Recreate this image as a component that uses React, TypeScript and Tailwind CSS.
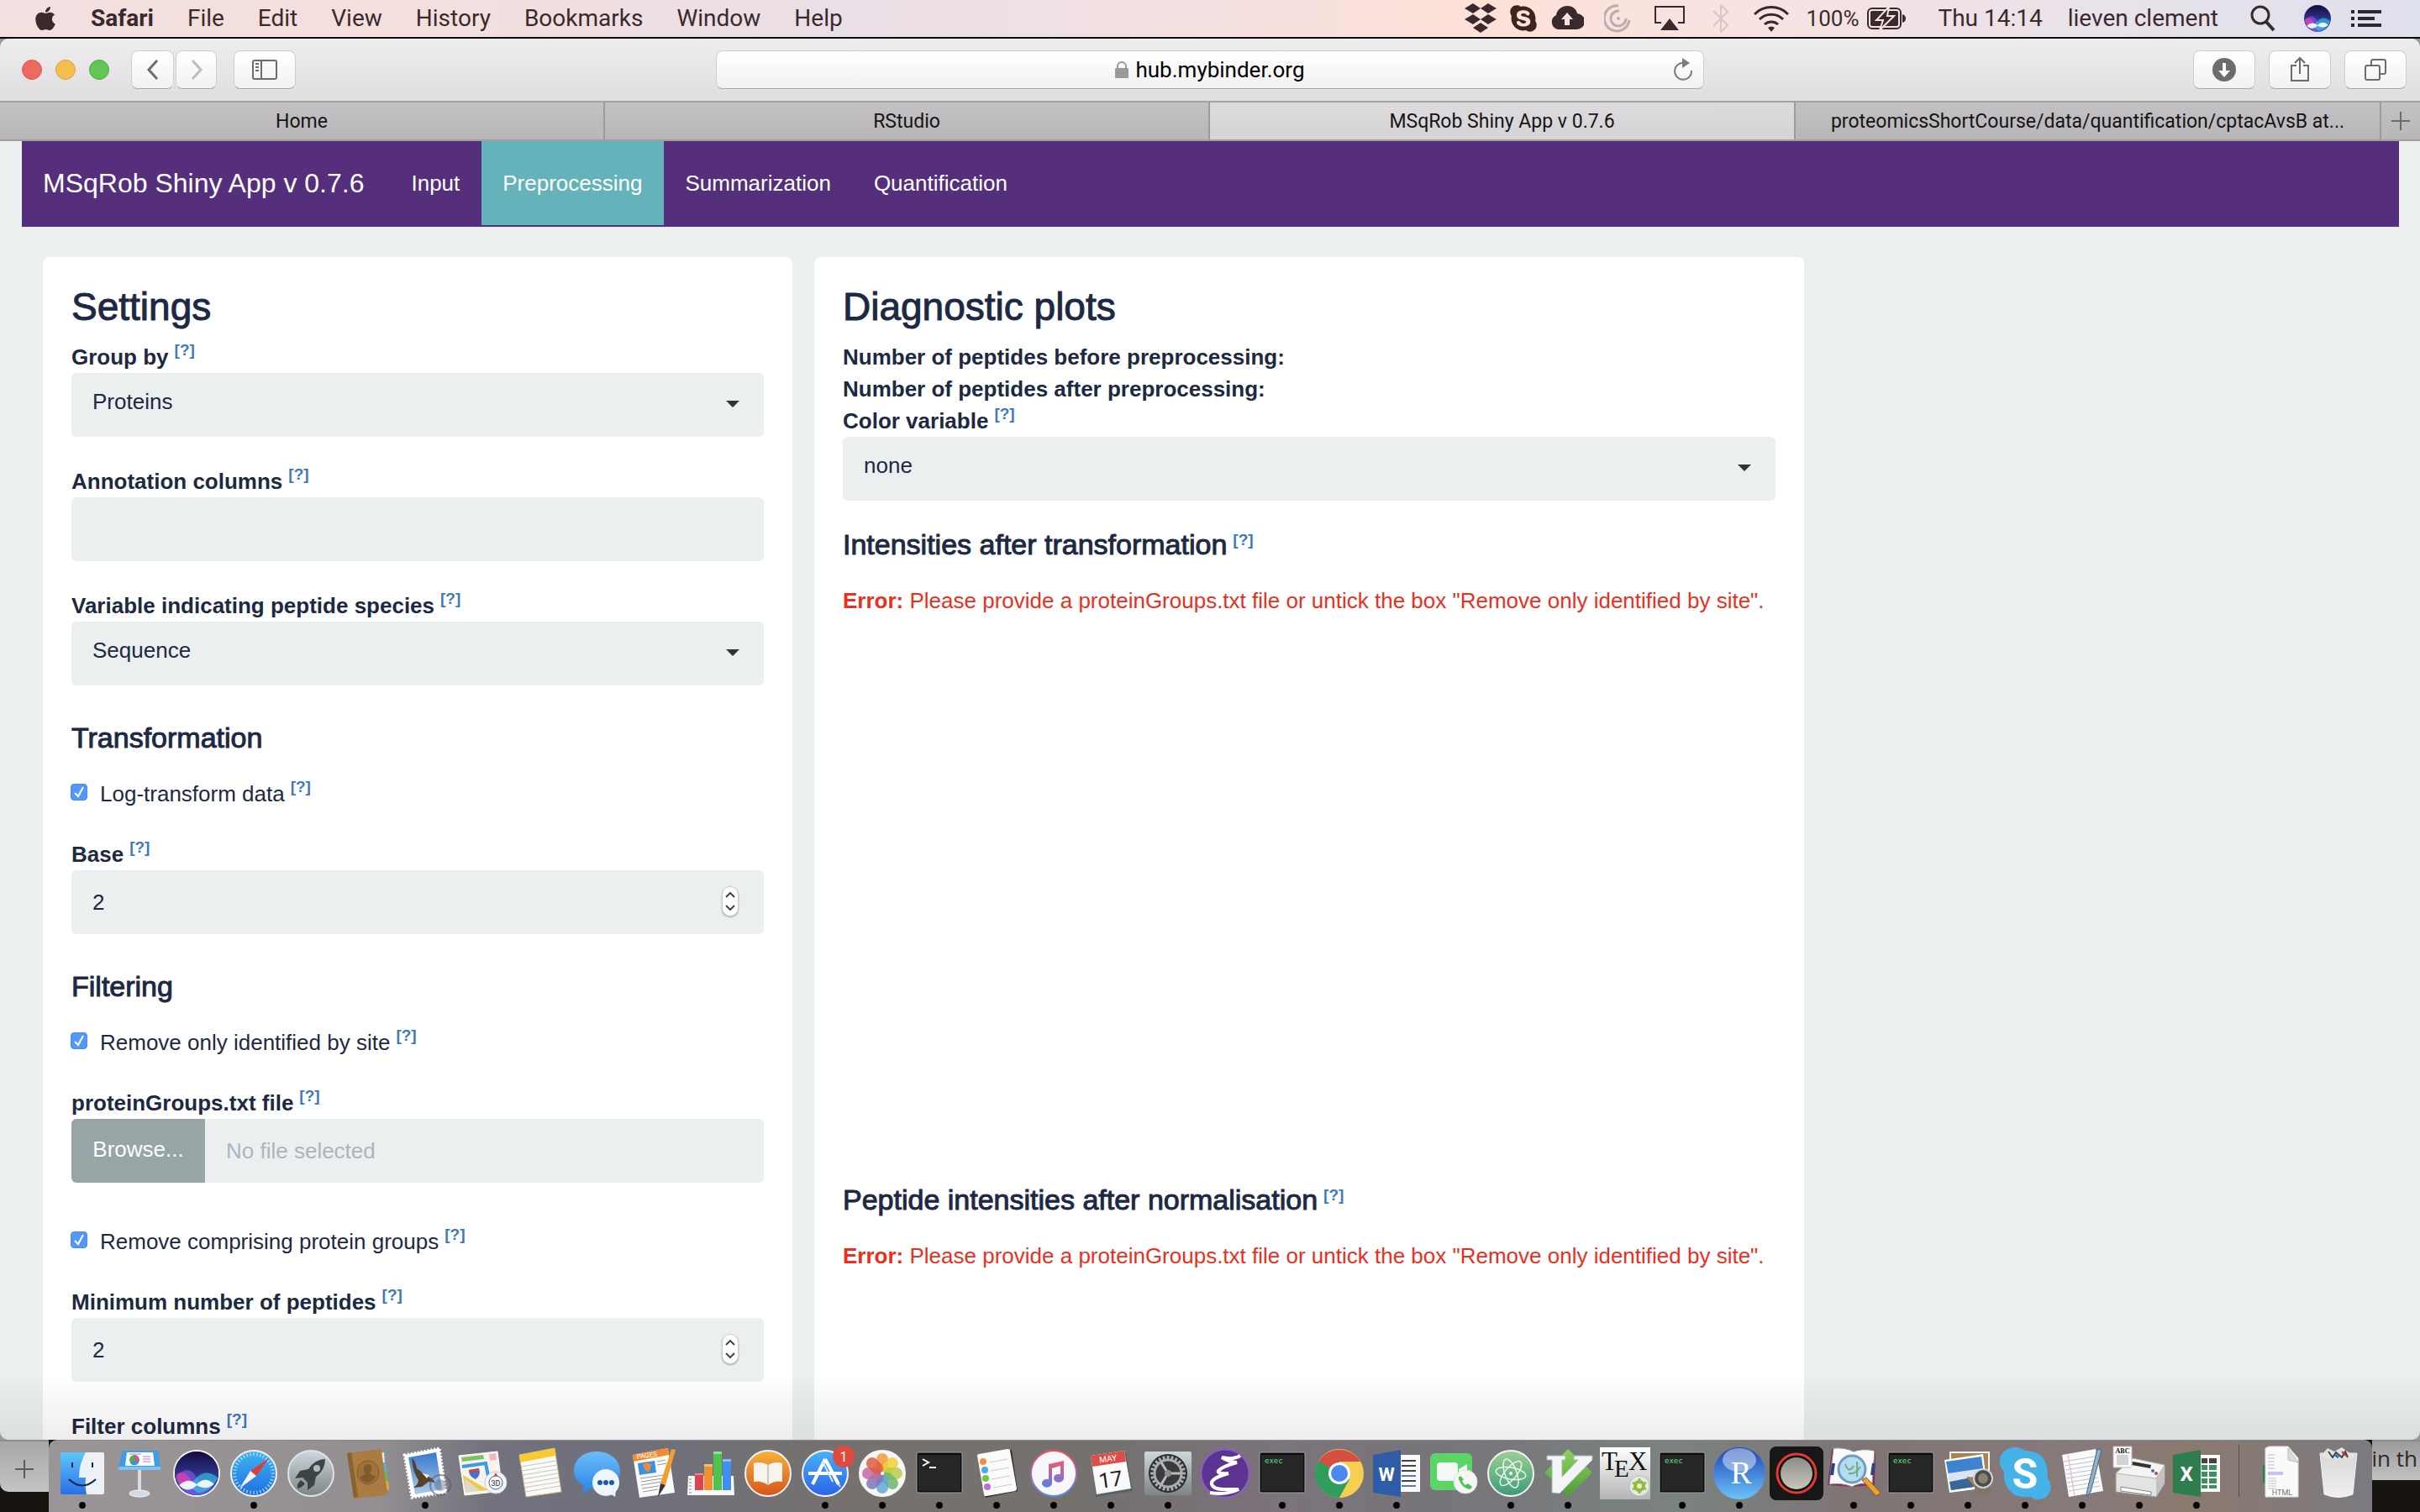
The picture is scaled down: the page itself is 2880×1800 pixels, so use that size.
import React, { useState } from "react";
import { FaApple, FaSkype } from "react-icons/fa";

/* ------------------------------------------------------------------ */
/* Menu bar                                                            */
/* ------------------------------------------------------------------ */

const menus = ["File", "Edit", "View", "History", "Bookmarks", "Window", "Help"];

function SiriOrb({ r = 16 }: { r?: number }) {
  return (
    <g>
      <circle r={r} fill="url(#siri)" />
      <path d={`M${-r * 0.95} ${r * 0.2} Q${-r * 0.4} ${-r * 0.5} 0 ${r * 0.2} T${r * 0.95} ${r * 0.2} Q${r * 0.5} ${r} 0 ${r * 0.98} Q${-r * 0.6} ${r} ${-r * 0.95} ${r * 0.2}Z`} fill="#7a5be8" opacity=".65" />
      <path d={`M${-r * 0.95} ${r * 0.25} Q${-r * 0.5} ${r * 0.7} ${-r * 0.1} ${r * 0.3} Q${r * 0.4} ${-r * 0.3} ${r * 0.96} ${r * 0.2} Q${r * 0.7} ${r * 0.8} ${r * 0.1} ${r * 0.9} Z`} fill="#2fd6e6" opacity=".6" />
      <path d={`M${-r * 0.95} ${r * 0.1} Q${-r * 0.6} ${-r * 0.3} ${-r * 0.2} ${r * 0.4} L${-r * 0.8} ${r * 0.5}Z`} fill="#e83ca8" opacity=".75" />
      <path d={`M${-r * 0.8} ${r * 0.55} Q${-r * 0.4} ${r * 0.15} 0 ${r * 0.5} Q${r * 0.4} ${r * 0.1} ${r * 0.8} ${r * 0.5} Q${r * 0.4} ${r * 0.8} 0 ${r * 0.55} Q${-r * 0.4} ${r * 0.95} ${-r * 0.8} ${r * 0.55}Z`} fill="#fff" opacity=".9" />
    </g>
  );
}

function MenuBar() {
  return (
    <header className="flex h-[46px] shrink-0 items-center border-b-2 border-[#08070a] bg-[linear-gradient(90deg,#f2dfdf_0%,#f4dfdd_16%,#e9dfe6_35%,#f3e0e0_50%,#fee1d8_61%,#f7e3e2_73%,#e9e2e9_86%,#dfe1ec_100%)] pr-[46px] pl-[38px] text-[28px] leading-none text-[#3a2a2d]">
      <FaApple className="mr-[38px] size-[32px]" />
      <nav aria-label="Menu bar" className="flex items-center gap-10">
        <button className="font-bold">Safari</button>
        {menus.map((m) => (
          <button key={m}>{m}</button>
        ))}
      </nav>
      <div className="ml-auto flex items-center">
        <svg className="w-[38px]" viewBox="0 0 38 36" fill="currentColor">
          <path d="M10 0l9 6-9 6-10-6zM28 0l10 6-10 6-9-6zM10 13l9 6-9 6-10-6zM28 13l10 6-10 6-9-6zM19 23l9 6-9 6-9-6z" />
        </svg>
        <FaSkype className="ml-[14px] size-[36px] text-[#3c251f]" />
        <svg className="ml-[14px] w-[40px]" viewBox="0 0 40 30">
          <path d="M9 28a9 9 0 01-2-17C8 4 14 0 20 0c7 0 11 4 12 9a9 9 0 01-1 19z" fill="currentColor" />
          <path d="M20 8l7 8h-4v7h-6v-7h-4z" fill="#f5e3e1" />
        </svg>
        <svg className="ml-[24px] w-[32px]" viewBox="0 0 32 34" fill="none" stroke="#bfacae" strokeWidth="3">
          <path d="M17 2a15 15 0 1013 17M18 8a9 9 0 108 9" />
          <circle cx="17" cy="17" r="1.500" fill="#bfacae" strokeWidth="1" />
        </svg>
        <svg className="ml-[28px] w-[36px]" viewBox="0 0 36 32">
          <path d="M8 21H1V2h34v19h-7" fill="none" stroke="currentColor" strokeWidth="2" />
          <path d="M18 16l11 14H7z" fill="currentColor" />
        </svg>
        <svg className="ml-[33px] w-[20px]" viewBox="0 0 20 34" fill="none" stroke="#d6c5c7" strokeWidth="2">
          <path d="M1 8l17 17-8 8V1l8 8L1 26" />
        </svg>
        <svg className="ml-[29px] w-[42px]" viewBox="0 0 42 32" fill="none" stroke="currentColor" strokeWidth="3">
          <path d="M1 11a28 28 0 0140 0M7 17a20 20 0 0128 0M13 23a12 12 0 0116 0" />
          <path d="M17 27q4-3 8 0l-4 5z" fill="currentColor" stroke="none" />
        </svg>
        <span className="ml-[21px] text-[26px]">100%</span>
        <svg className="ml-[10px] w-[46px]" viewBox="0 0 46 26">
          <rect x="1" y="1" width="39" height="24" rx="5" fill="none" stroke="currentColor" strokeWidth="2" />
          <rect x="4" y="4" width="33" height="18" rx="2" fill="currentColor" />
          <path d="M42 8q4 1 4 5t-4 5z" fill="currentColor" />
          <path d="M26-1L11 15h8l-4 12 17-17h-8z" fill="currentColor" stroke="#f7e4e2" strokeWidth="2" />
        </svg>
        <span className="ml-[38px]">Thu 14:14</span>
        <span className="ml-[30px]">lieven clement</span>
        <svg className="ml-[38px] w-[30px]" viewBox="0 0 30 32" fill="none" stroke="currentColor">
          <circle cx="12" cy="12" r="10" strokeWidth="3" />
          <path d="M19 20l9 10" strokeWidth="4" />
        </svg>
        <svg className="ml-[34px] w-[32px]" viewBox="-16 -16 32 32">
          <SiriOrb />
        </svg>
        <svg className="ml-[24px] w-[36px]" viewBox="0 0 36 20" fill="#2c2733">
          <path d="M0 0h4v4H0zM8 0h28v4H8zM0 8h4v4H0zM8 8h20v4H8zM0 16h4v4H0zM8 16h28v4H8z" />
        </svg>
      </div>
    </header>
  );
}

/* ------------------------------------------------------------------ */
/* Browser chrome                                                      */
/* ------------------------------------------------------------------ */

const toolButton =
  "flex h-[46px] items-center justify-center rounded-lg border border-[#cfcdd0] border-b-[#a8a6a9] bg-linear-to-b from-white to-[#f2f1f2] text-[#6c6c6c]";

function Toolbar() {
  return (
    <div className="flex h-[76px] shrink-0 items-center border-b-2 border-[#a3a1a4] bg-linear-to-b from-[#efedf0] to-[#dfdde0] pr-4 pl-[26px]">
      <div className="flex gap-4">
        <button aria-label="Close" className="size-6 rounded-full border border-[#d8574d] bg-[#ee6a5f]" />
        <button aria-label="Minimize" className="size-6 rounded-full border border-[#d9a33c] bg-[#f5be4f]" />
        <button aria-label="Zoom" className="size-6 rounded-full border border-[#50a73f] bg-[#62c655]" />
      </div>
      <div className="ml-[26px] flex w-[582px] gap-[2px]">
        <button aria-label="Back" className={`${toolButton} w-[51px]`}>
          <svg className="w-[14px]" viewBox="0 0 14 24" fill="none" stroke="currentColor" strokeWidth="3">
            <path d="M12 1L2 12l10 11" />
          </svg>
        </button>
        <button aria-label="Forward" className={`${toolButton} w-[49px]`}>
          <svg className="w-[14px]" viewBox="0 0 14 24" fill="none" stroke="#bdbdbd" strokeWidth="3">
            <path d="M2 1l10 11L2 23" />
          </svg>
        </button>
        <button aria-label="Show sidebar" className={`${toolButton} ml-[18px] w-[74px]`}>
          <svg className="w-[30px]" viewBox="0 0 30 24" fill="none" stroke="currentColor" strokeWidth="2">
            <rect x="1" y="1" width="28" height="22" rx="2" />
            <path d="M11 1v22M4 5h4M4 9h4M4 13h4" />
          </svg>
        </button>
      </div>
      <div className={`${toolButton} ml-[114px] min-w-0 flex-1 px-3`}>
        <span className="w-6" />
        <label className="flex flex-1 items-center justify-center gap-2">
          <svg className="w-[16px]" viewBox="0 0 16 20" fill="#9a9a9a">
            <rect x="0" y="8" width="16" height="12" rx="1" />
            <path d="M3 9V6a5 5 0 0110 0v3" fill="none" stroke="#9a9a9a" strokeWidth="2" />
          </svg>
          <input aria-label="Address" defaultValue="hub.mybinder.org" className="field-sizing-content bg-transparent text-[26px] leading-8 text-black" />
        </label>
        <button aria-label="Reload">
          <svg className="w-6" viewBox="0 0 24 28" fill="none" stroke="#7d7d7d" strokeWidth="2">
            <path d="M14 6a10 10 0 108 9" />
            <path d="M11 0l9 6-9 6z" fill="#7d7d7d" stroke="none" />
          </svg>
        </button>
      </div>
      <div className="ml-[582px] flex gap-4">
        <button aria-label="Downloads" className={`${toolButton} w-[74px]`}>
          <svg className="w-7" viewBox="0 0 28 28">
            <circle cx="14" cy="14" r="14" fill="#6c6c6c" />
            <path d="M12 6h4v9h5l-7 8-7-8h5z" fill="#fff" />
          </svg>
        </button>
        <button aria-label="Share" className={`${toolButton} w-[74px]`}>
          <svg className="w-[24px]" viewBox="0 0 24 32" fill="none" stroke="currentColor" strokeWidth="2">
            <path d="M8 11H2v18h20V11h-6M12 21V3M6 8l6-6 6 6" />
          </svg>
        </button>
        <button aria-label="Show all tabs" className={`${toolButton} w-[74px]`}>
          <svg className="w-[26px]" viewBox="0 0 26 26" fill="none" stroke="currentColor" strokeWidth="2">
            <rect x="1" y="8" width="17" height="17" rx="2" />
            <path d="M8 8V3q0-2 2-2h13q2 0 2 2v13q0 2-2 2h-5" />
          </svg>
        </button>
      </div>
    </div>
  );
}

function TabBar() {
  const tab = "flex items-center justify-center border-r-2 border-[#9c9a9d] px-8 text-[23px] text-[#151515]";
  const idle = "bg-linear-to-b from-[#c3c1c4] to-[#b8b6b9]";
  return (
    <div role="tablist" className="grid h-[46px] shrink-0 grid-cols-[720fr_720fr_697fr_697fr_46fr] border-b-2 border-[#a09ea1] leading-none">
      <button role="tab" className={`${tab} ${idle}`}>Home</button>
      <button role="tab" className={`${tab} ${idle}`}>RStudio</button>
      <button role="tab" aria-selected="true" className={`${tab} bg-linear-to-b from-[#dddbde] to-[#d5d3d6]`}>MSqRob Shiny App v 0.7.6</button>
      <button role="tab" className={`${tab} ${idle} whitespace-nowrap`}>proteomicsShortCourse/data/quantification/cptacAvsB at...</button>
      <button aria-label="New tab" className={`flex items-center justify-center ${idle}`}>
        <svg className="w-[22px]" viewBox="0 0 22 22" stroke="#6b6b6b" strokeWidth="2">
          <path d="M11 0v22M0 11h22" />
        </svg>
      </button>
    </div>
  );
}

/* ------------------------------------------------------------------ */
/* Web application                                                     */
/* ------------------------------------------------------------------ */

function Help() {
  return (
    <sup className="-top-[11px] ml-[7px] text-[19px] font-bold [-webkit-text-stroke:0]">
      <a href="#help" className="text-[#4079b8]">[?]</a>
    </sup>
  );
}

function FieldLabel({ id, children }: { id: string; children: React.ReactNode }) {
  return (
    <div className="font-bold">
      <label htmlFor={id}>{children}</label>
      <Help />
    </div>
  );
}

const box = "h-[76px] w-full rounded-md bg-[#ebeff0] px-[25px]";
const panelTitle = "mb-4 text-[46px] leading-[50px] [-webkit-text-stroke:1px]";
const sectionTitle = "mb-[30px] text-[34px] leading-9 [-webkit-text-stroke:1px]";

function SelectField({ id, label, value }: { id: string; label: string; value: string }) {
  return (
    <div className="mb-[34px]">
      <FieldLabel id={id}>{label}</FieldLabel>
      <div className="relative">
        <select id={id} className={`${box} block appearance-none pb-2`}>
          <option>{value}</option>
        </select>
        <svg className="pointer-events-none absolute top-[33px] right-[29px] w-4" viewBox="0 0 16 8">
          <path d="M0 0h16L8 8z" fill="#333" />
        </svg>
      </div>
    </div>
  );
}

function TextField({ id, label }: { id: string; label: string }) {
  return (
    <div className="mb-[34px]">
      <FieldLabel id={id}>{label}</FieldLabel>
      <input id={id} type="text" className={`${box} block`} />
    </div>
  );
}

function NumberField({ id, label }: { id: string; label: string }) {
  const [value, setValue] = useState(2);
  return (
    <div className="mb-[34px]">
      <FieldLabel id={id}>{label}</FieldLabel>
      <div className="relative">
        <input
          id={id}
          type="number"
          value={value}
          onChange={(e) => setValue(Number(e.target.value))}
          className={`${box} block [appearance:textfield] [&::-webkit-inner-spin-button]:appearance-none`}
        />
        <div className="absolute top-[19px] right-[30px] flex h-9 w-5 flex-col items-center justify-between rounded-full border border-[#cfcfcf] bg-white py-[6px] shadow-[0_1px_2px_rgba(0,0,0,0.35)]">
          <button aria-label="Increase" onClick={() => setValue(value + 1)}>
            <svg className="block w-[12px]" viewBox="0 0 12 7" fill="none" stroke="#444" strokeWidth="2">
              <path d="M1 6l5-5 5 5" />
            </svg>
          </button>
          <button aria-label="Decrease" onClick={() => setValue(value - 1)}>
            <svg className="block w-[12px]" viewBox="0 0 12 7" fill="none" stroke="#444" strokeWidth="2">
              <path d="M1 1l5 5 5-5" />
            </svg>
          </button>
        </div>
      </div>
    </div>
  );
}

function CheckField({ id, label }: { id: string; label: string }) {
  return (
    <div className="mb-[34px] flex">
      <span className="relative mt-[7px] mr-[15px] -ml-px block size-5">
        <input id={id} type="checkbox" defaultChecked className="peer block size-5 appearance-none rounded border border-[#a9b3c0] bg-white checked:border-[#4a8ff0] checked:bg-[#5398f8]" />
        <svg className="pointer-events-none absolute inset-0 hidden size-5 peer-checked:block" viewBox="0 0 20 20" fill="none" stroke="#fff" strokeWidth="2">
          <path d="M5 11l4 4 6-11" />
        </svg>
      </span>
      <div>
        <label htmlFor={id}>{label}</label>
        <Help />
      </div>
    </div>
  );
}

function SettingsPanel() {
  return (
    <section className="rounded-lg bg-white p-[34px]">
      <h2 className={panelTitle}>Settings</h2>
      <SelectField id="group-by" label="Group by" value="Proteins" />
      <TextField id="annotation" label="Annotation columns" />
      <SelectField id="species" label="Variable indicating peptide species" value="Sequence" />

      <h4 className={`${sectionTitle} mt-11`}>Transformation</h4>
      <CheckField id="log" label="Log-transform data" />
      <NumberField id="base" label="Base" />

      <h4 className={`${sectionTitle} mt-11`}>Filtering</h4>
      <CheckField id="by-site" label="Remove only identified by site" />
      <div className="mb-[51px]">
        <FieldLabel id="protein-groups">proteinGroups.txt file</FieldLabel>
        <div className="flex h-[76px] overflow-hidden rounded-md bg-[#ebeff0]">
          <button className="w-[159px] shrink-0 bg-[#97a5a6] pb-[5px] text-white">Browse...</button>
          <input id="protein-groups" readOnly placeholder="No file selected" className="min-w-0 flex-1 bg-transparent px-[25px] placeholder:text-[#acb5bd]" />
        </div>
      </div>
      <CheckField id="comprising" label="Remove comprising protein groups" />
      <NumberField id="min-peptides" label="Minimum number of peptides" />
      <TextField id="filter-columns" label="Filter columns" />
    </section>
  );
}

function PlotSlot({ title }: { title: string }) {
  return (
    <div className="h-[780px]">
      <h4 className={sectionTitle}>
        {title}
        <Help />
      </h4>
      <p role="alert" className="whitespace-nowrap text-[#e7301f]">
        <strong>Error:</strong> Please provide a proteinGroups.txt file or untick the box "Remove only identified by site".
      </p>
    </div>
  );
}

function PlotsPanel() {
  return (
    <section className="rounded-lg bg-white p-[34px]">
      <h2 className={panelTitle}>Diagnostic plots</h2>
      <p className="font-bold">Number of peptides before preprocessing:</p>
      <p className="font-bold">Number of peptides after preprocessing:</p>
      <SelectField id="color-variable" label="Color variable" value="none" />
      <PlotSlot title="Intensities after transformation" />
      <PlotSlot title="Peptide intensities after normalisation" />
    </section>
  );
}

function WebApp() {
  const link = "flex h-[100px] items-center pl-[25px] text-white";
  return (
    <main className="relative min-h-0 flex-1 overflow-hidden bg-[#ebeff0] font-['Liberation_Sans',Arial,sans-serif] text-[26px] leading-[38px] text-[#1d2943]">
      <nav aria-label="Sections" className="mr-[25px] ml-[26px] flex h-[102px] bg-[#552f7c]">
        <a href="#home" className={`${link} pr-[31px] text-[32px]`}>MSqRob Shiny App v 0.7.6</a>
        <a href="#input" className={`${link} pr-[26px]`}>Input</a>
        <a href="#preprocessing" aria-current="page" className={`${link} bg-[#65b3ba] pr-[26px]`}>Preprocessing</a>
        <a href="#summarization" className={`${link} pr-[26px]`}>Summarization</a>
        <a href="#quantification" className={`${link} pr-[26px]`}>Quantification</a>
      </nav>
      <div className="mt-9 grid grid-cols-[892fr_1178fr_656fr] gap-x-[26px] px-[51px]">
        <SettingsPanel />
        <PlotsPanel />
      </div>
      <div className="pointer-events-none absolute inset-x-0 bottom-0 h-20 bg-linear-to-b from-transparent to-black/7" />
    </main>
  );
}

/* ------------------------------------------------------------------ */
/* Dock                                                                */
/* ------------------------------------------------------------------ */

function Exec({ prompt }: { prompt?: boolean }) {
  return (
    <g>
      <rect x="7" y="9" width="54" height="48" rx="2" fill="#0b0b0b" stroke="#9fa3a8" strokeWidth="1" />
      <rect x="9" y="12" width="50" height="43" fill="#262626" />
      {prompt ? (
        <path d="M14 17l7 4-7 4M22 27h8" fill="none" stroke="#fff" strokeWidth="2" />
      ) : (
        <text x="13" y="22" fontSize="9" fill="#5fe07a" fontFamily="DejaVu Sans Mono, monospace">exec</text>
      )}
    </g>
  );
}

function Lines({ x, y, w, n, step, color }: { x: number; y: number; w: number; n: number; step: number; color: string }) {
  return (
    <path d={Array.from({ length: n }, (_, i) => `M${x} ${y + i * step}h${w}`).join("")} stroke={color} strokeWidth="1" fill="none" />
  );
}

const ring = { cx: 34, cy: 34, r: 27, stroke: "#f4f4f4", strokeWidth: 2 };
const petals = ["#f29a38", "#f2cf3b", "#b5cf4b", "#6db56a", "#63a8d8", "#7d78b8", "#c06ba3", "#e25a45"];
const ticks = Array.from({ length: 36 }, (_, i) => i * 10);
const teeth = Array.from({ length: 24 }, (_, i) => i * 15);

type App = { name: string; open?: boolean; art: React.ReactNode };

const apps: App[] = [
  {
    name: "Finder", open: true,
    art: (
      <g>
        <rect x="8" y="9" width="52" height="50" rx="2" fill="url(#finder)" />
        <path d="M38 9h20q2 0 2 2v46q0 2-2 2H39q-2-9-1-20h-8q0-16 8-30z" fill="#eef2f8" />
        <path d="M22 21v6M46 21v6" stroke="#12263f" strokeWidth="2" />
        <path d="M18 41q16 15 32 0" fill="none" stroke="#12263f" strokeWidth="2" />
      </g>
    ),
  },
  {
    name: "Keynote",
    art: (
      <g>
        <rect x="32" y="28" width="4" height="29" fill="#d7dde4" />
        <ellipse cx="34" cy="58" rx="12" ry="4" fill="#cfdbe6" stroke="#f5f8fa" />
        <path d="M14 7h42l3 19v4H9v-4z" fill="#3f9de8" />
        <path d="M9 26h50v4H9z" fill="#7cc4f5" />
        <path d="M19 9h31l2 16H17z" fill="#fff" />
        <circle cx="28" cy="18" r="6" fill="#4caf50" />
        <path d="M28 18v-6a6 6 0 015 8z" fill="#e84c8a" /><path d="M28 18l5 3a6 6 0 01-10 1z" fill="#3b8fe0" />
        <path d="M22 11h14M38 14h9M38 17h9M38 20h9" stroke="#b77ad0" strokeWidth="1" />
      </g>
    ),
  },
  { name: "Siri", art: (<g><circle {...ring} fill="#18123a" /><g transform="translate(34 34)"><SiriOrb r={26} /></g></g>) },
  {
    name: "Safari", open: true,
    art: (
      <g>
        <circle {...ring} fill="url(#blue)" />
        {ticks.map((a) => (<path key={a} d="M34 9v4" stroke="#d7ecfb" strokeWidth="1" transform={`rotate(${a} 34 34)`} />))}
        <path d="M52 16L30 31l7 6z" fill="#e23b36" /><path d="M17 52l13-21 7 6z" fill="#f4f4f4" />
      </g>
    ),
  },
  {
    name: "Launchpad",
    art: (
      <g>
        <circle {...ring} stroke="#dfe4e6" fill="url(#silver)" />
        <path d="M51 17q-12 0-20 12l-10 2-6 9 9-1 6 6 0 9 8-6 2-10q11-8 11-21z" fill="#3d4347" />
        <circle cx="41" cy="28" r="4" fill="#b4bcc0" /><path d="M22 42q-5 4-4 10 6-1 9-6z" fill="#3d4347" />
      </g>
    ),
  },
  {
    name: "Contacts",
    art: (
      <g>
        <path d="M48 10l5-1 1 12-5 1z" fill="#e8e8e8" /><path d="M50 22l5-1 1 12-5 1z" fill="#52b6cc" /><path d="M51 33l5-1 1 12-5 1z" fill="#5dc44f" /><path d="M53 44l5-1 1 10-5 2z" fill="#f0a531" />
        <path d="M9 10l39-5 2 2 7 50-2 3-38 4z" fill="#aa7c44" /><path d="M9 10l5-1 8 53-5 1z" fill="#8a6232" />
        <ellipse cx="34" cy="33" rx="13" ry="14" fill="#a07238" stroke="#7f5a2c" />
        <path d="M34 23q5 0 4 6-1 4-2 5l7 4q-4 7-9 7t-10-6l7-5q-3-3-2-7 1-4 5-4z" fill="#7f5a2c" />
      </g>
    ),
  },
  {
    name: "Mail", open: true,
    art: (
      <g>
        <path d="M9 12l42-8 8 53-41 6z" fill="#fff" stroke="#fff" strokeWidth="3" strokeDasharray="2 2" />
        <path d="M14 15l33-6 7 44-32 6z" fill="url(#sky)" />
        <path d="M18 16q4 2 6 12 5 3 8 8l10 4 4 5q-4-1-8-1l-8 6-10 1q6-4 6-9-7-10-8-26z" fill="#5a4028" /><path d="M31 34l8 2-3 4z" fill="#f4efe2" />
        <circle cx="52" cy="48" r="12" fill="none" stroke="#555b66" strokeWidth="2" opacity=".6" /><circle cx="52" cy="48" r="7" fill="#555b66" opacity=".4" />
      </g>
    ),
  },
  {
    name: "Maps",
    art: (
      <g>
        <path d="M6 13l46-5 6 47-45 5z" fill="#f6f3ea" stroke="#fff" />
        <path d="M9 15l26-3 1 5-26 3z" fill="#7cc162" /><path d="M42 11l8-1 1 8-8 1z" fill="#f0b8c4" />
        <path d="M10 26l28-4 4 20" fill="none" stroke="#3a9be8" strokeWidth="4" /><path d="M14 56l-3-20 30 18z" fill="#f1c744" /><path d="M13 40l18 14-17 3z" fill="#dfd9c8" />
        <path d="M18 30l12-2q3 8-4 13-8-3-8-11z" fill="#4173c8" /><path d="M18 30l12-2v3l-12 2z" fill="#d8433b" />
        <circle cx="50" cy="45" r="13" fill="#f5f6f7" stroke="#c9ccd0" /><circle cx="50" cy="45" r="8" fill="none" stroke="#4b6d8b" />
        <text x="50" y="49" textAnchor="middle" fontSize="9" fill="#333">3D</text><path d="M50 33l2 4h-4z" fill="#d33" />
      </g>
    ),
  },
  {
    name: "Notes",
    art: (
      <g>
        <path d="M10 12l42-8 8 52-42 6z" fill="#fbfaf6" stroke="#c9b58c" /><path d="M10 12l42-8 1 9-42 8z" fill="#f7c933" />
        <path d="M12 26l42-7M13 31l42-7M14 36l42-7M14 41l42-7M15 46l42-7M16 51l42-7M17 56l42-7" stroke="#c7c7c7" strokeWidth="1" />
      </g>
    ),
  },
  {
    name: "Messages",
    art: (
      <g>
        <path d="M34 8c16 0 28 10 28 23S50 53 34 53q-5 0-8-1-4 5-11 6 5-5 3-10Q7 42 7 31C7 18 18 8 34 8z" fill="url(#bubble)" />
        <circle cx="45" cy="45" r="16" fill="#eef6fd" /><path d="M50 58l6 4 1-8z" fill="#eef6fd" />
        <circle cx="38" cy="45" r="3" fill="#1c5aa8" /><circle cx="45" cy="45" r="3" fill="#1c5aa8" /><circle cx="52" cy="45" r="3" fill="#1c5aa8" />
      </g>
    ),
  },
  {
    name: "Pages",
    art: (
      <g>
        <path d="M9 12l42-8 8 53-42 6z" fill="#fafafa" /><path d="M9 12l42-8 1 8-42 8z" fill="#f08c2e" />
        <text x="14" y="17" fontSize="8" fill="#fff" transform="rotate(-8 14 17)">PAGES</text>
        <path d="M15 22l20-3 2 14-20 3z" fill="#3d8fe0" /><path d="M21 23q5-2 10 0 0 6-4 10-5-4-6-10z" fill="#ef8b33" />
        <path d="M38 20l10-2M38 24l11-2M18 40l28-4M19 44l26-4M19 48l24-4M20 52l20-3M21 56l18-3" stroke="#999" strokeWidth="1" />
        <path d="M55 5l5 1-12 42-6-2z" fill="#f0a030" /><path d="M42 46l6 2-9 14z" fill="#333" />
      </g>
    ),
  },
  {
    name: "Numbers",
    art: (
      <g>
        <path d="M7 37h54l1 23H6z" fill="#f8f8f8" /><Lines x={8} y={41} w={3} n={5} step={4} color="#888" />
        <rect x="15" y="34" width="10" height="20" fill="#e0424e" /><rect x="26" y="23" width="10" height="31" fill="#f09035" /><rect x="37" y="8" width="10" height="46" fill="#4fc44c" /><rect x="48" y="17" width="10" height="37" fill="#3f8ff0" />
        <path d="M15 34h10v2H15zM26 23h10v3H26zM37 8h10v3H37zM48 17h10v3H48z" fill="#fff" opacity=".4" />
      </g>
    ),
  },
  {
    name: "iBooks",
    art: (<g><circle {...ring} fill="url(#orange)" /><path d="M34 24q-8-5-17-2v22q9-2 17 4 8-6 17-4V22q-9-3-17 2z" fill="#f7f4ef" /><path d="M34 24v24" stroke="#cfc5b8" strokeWidth="2" /></g>),
  },
  {
    name: "App Store", open: true,
    art: (
      <g>
        <circle {...ring} fill="url(#store)" />
        <path d="M34 17L19 47M34 17l16 30M14 34h40" stroke="#fff" strokeWidth="4" fill="none" /><path d="M31 20l12 24M50 47l2 3" stroke="#d7e9fb" strokeWidth="2" />
        <circle cx="56" cy="14" r="13" fill="#e14b3f" /><text x="56" y="20" textAnchor="middle" fontSize="16" fill="#fff">1</text>
      </g>
    ),
  },
  {
    name: "Photos", open: true,
    art: (
      <g>
        <circle {...ring} fill="#f7f7f7" />
        {petals.map((c, i) => (<rect key={c} x="27" y="10" width="14" height="23" rx="7" fill={c} opacity=".85" transform={`rotate(${i * 45} 34 34)`} />))}
        <circle cx="34" cy="34" r="2" fill="#fff" />
      </g>
    ),
  },
  { name: "Terminal", open: true, art: <Exec prompt /> },
  {
    name: "Reminders", open: true,
    art: (
      <g>
        <path d="M13 13l39-7 7 49-38 8z" fill="#333" /><path d="M11 13q0-2 2-2l34-6q3 0 3 2l8 45q0 2-2 3l-34 6q-3 0-3-2z" fill="#fbfbfb" />
        <circle cx="18" cy="20" r="4" fill="#f0923a" /><circle cx="20" cy="30" r="4" fill="#4aa8f0" /><circle cx="21" cy="40" r="4" fill="#6cc94b" /><circle cx="23" cy="50" r="4" fill="#b871d8" />
        <path d="M25 21l22-4M27 31l22-4M28 41l22-4M30 51l22-4" stroke="#ccc" />
      </g>
    ),
  },
  {
    name: "iTunes", open: true,
    art: (<g><circle cx="34" cy="34" r="27" fill="#f8f8fb" stroke="url(#tunes)" strokeWidth="2" /><path d="M28 23l18-4v21a6 5 0 11-4-5V25l-10 3v18a6 5 0 11-4-5z" fill="url(#note)" /></g>),
  },
  {
    name: "Calendar", open: true,
    art: (
      <g>
        <path d="M12 16l40-6 8 45-44 7z" fill="#56636b" /><path d="M10 13l40-6 8 45-41 7z" fill="#fafafa" /><path d="M10 13l40-6 2 13-40 6z" fill="#dc4f48" />
        <text x="31" y="20" textAnchor="middle" fontSize="10" fill="#fff" transform="rotate(-8 31 20)">MAY</text><text x="35" y="50" textAnchor="middle" fontSize="25" fill="#222" transform="rotate(-8 35 50)">17</text>
      </g>
    ),
  },
  {
    name: "System Preferences", open: true,
    art: (
      <g>
        <rect x="6" y="8" width="56" height="52" rx="2" fill="url(#silver)" /><circle cx="34" cy="34" r="23" fill="#2c2d2f" />
        {teeth.map((a) => (<path key={a} d="M34 13v5" stroke="#a9abad" strokeWidth="3" transform={`rotate(${a} 34 34)`} />))}
        <circle cx="34" cy="34" r="16" fill="#3a3b3d" stroke="#a9abad" strokeWidth="3" /><path d="M34 34l15 0M34 34l-8-13M34 34l-8 13" stroke="#b9bbbd" strokeWidth="3" /><circle cx="34" cy="34" r="4" fill="#8b8d90" />
      </g>
    ),
  },
  {
    name: "Emacs",
    art: (<g><circle cx="34" cy="34" r="29" fill="#5c3390" stroke="#8463ad" strokeWidth="3" /><path d="M52 13q-8 5-22 2 10 6 18 6-18 5-22 10-2 4 12 3-22 6-20 13 2 6 14 6h18q-14 7-34 4" fill="none" stroke="#fff" strokeWidth="4" /></g>),
  },
  { name: "exec", open: true, art: <Exec /> },
  {
    name: "Chrome", open: true,
    art: (
      <g>
        <circle cx="34" cy="34" r="29" fill="#f6cf52" /><path d="M34 34L9 20a29 29 0 0150 0H34z" fill="#d64f40" /><path d="M9 19a29 29 0 0025 44l12-22-12-7z" fill="#2f9e5c" /><path d="M34 21h25a29 29 0 01-25 42l13-22z" fill="#f6cf52" />
        <circle cx="34" cy="34" r="13" fill="#fff" /><circle cx="34" cy="34" r="10" fill="#4a8af0" />
      </g>
    ),
  },
  {
    name: "Word", open: true,
    art: (
      <g>
        <rect x="37" y="12" width="25" height="44" fill="#fafafa" /><path d="M40 19h17M40 25h17M40 31h17M40 43h17" stroke="#444" strokeWidth="2" /><path d="M40 37h17M40 49h17" stroke="#5578b8" strokeWidth="2" />
        <path d="M6 12l33-6v56L6 57z" fill="#2e5ca6" /><text x="22" y="43" textAnchor="middle" fontSize="22" fontWeight="700" fill="#fff">W</text>
      </g>
    ),
  },
  {
    name: "FaceTime",
    art: (<g><rect x="6" y="10" width="50" height="44" rx="6" fill="#5bd565" /><rect x="14" y="21" width="25" height="22" rx="4" fill="#f4f8f4" /><path d="M40 29l10-6v18l-10-6z" fill="#f4f8f4" /><circle cx="48" cy="44" r="14" fill="#f6f6f6" stroke="#ddd" /><path d="M42 37q-3 1-2 4 3 9 12 12 3 0 4-3l-5-4-3 2q-3-2-4-5l2-2z" fill="#4cc455" /></g>),
  },
  {
    name: "Atom", open: true,
    art: (
      <g>
        <circle {...ring} fill="url(#atom)" />
        <g fill="none" stroke="#eaf6ee" strokeWidth="1.500"><ellipse cx="34" cy="34" rx="18" ry="7" transform="rotate(10 34 34)" /><ellipse cx="34" cy="34" rx="18" ry="7" transform="rotate(70 34 34)" /><ellipse cx="34" cy="34" rx="18" ry="7" transform="rotate(130 34 34)" /></g>
        <circle cx="34" cy="34" r="2" fill="#fff" />
      </g>
    ),
  },
  {
    name: "MacVim", open: true,
    art: (<g><path d="M34 5l29 28-29 29L6 33z" fill="url(#vim)" /><path d="M9 13h22v5h-4v20l19-20h-5v-5h22v5L24 58l-9-1V18H9z" fill="#f2f4f5" stroke="#aeb4b4" /></g>),
  },
  {
    name: "TeXShop",
    art: (
      <g>
        <rect x="4" y="3" width="60" height="62" fill="url(#paper)" />
        <text x="6" y="30" fontSize="31" fill="#111" fontFamily="Liberation Serif, serif">T</text><text x="21" y="38" fontSize="29" fill="#111" fontFamily="Liberation Serif, serif">E</text><text x="38" y="30" fontSize="31" fill="#111" fontFamily="Liberation Serif, serif">X</text>
        <circle cx="51" cy="49" r="12" fill="#e8e8e8" stroke="#bbb" /><circle cx="51" cy="49" r="5" fill="none" stroke="#8fbd3a" strokeWidth="4" /><path d="M51 40v18M43 45l16 8M43 53l16-8" stroke="#8fbd3a" strokeWidth="3" /><circle cx="51" cy="49" r="3" fill="#e8e8e8" />
      </g>
    ),
  },
  { name: "exec", open: true, art: <Exec /> },
  {
    name: "R", open: true,
    art: (<g><circle cx="34" cy="34" r="31" fill="url(#rblue)" /><ellipse cx="34" cy="18" rx="20" ry="14" fill="#fff" opacity=".45" /><text x="36" y="46" textAnchor="middle" fontSize="37" fill="#fff" fontFamily="Liberation Serif, serif">R</text></g>),
  },
  {
    name: "Recorder",
    art: (<g><rect x="2" y="2" width="64" height="64" rx="8" fill="#161716" /><circle cx="34" cy="34" r="23" fill="#0c0c0c" stroke="#e23a30" strokeWidth="3" /><circle cx="34" cy="34" r="19" fill="url(#lens)" /></g>),
  },
  {
    name: "Skim", open: true,
    art: (
      <g>
        <path d="M8 5l26 3 26-2-1 42-27 2-29-2z" fill="#8b2e5c" /><path d="M10 4q14-1 24 4 10-4 25-1l-3 40q-14-3-24 3-11-5-27-3z" fill="#fafafa" stroke="#888" />
        <path d="M10 22l-2 14M58 22l-2 14" stroke="#2a4580" strokeWidth="4" /><circle cx="32" cy="29" r="16" fill="#b5dced" stroke="#6f9cc0" strokeWidth="3" /><path d="M24 23q4 12 10 2M38 20v18M28 34q8 2 14-8" stroke="#6cae8c" strokeWidth="2" fill="none" />
        <path d="M44 42l5-3 17 18-5 4z" fill="#efa02f" stroke="#8f5a17" />
      </g>
    ),
  },
  { name: "exec", open: true, art: <Exec /> },
  {
    name: "Preview", open: true,
    art: (
      <g>
        <rect x="13" y="9" width="46" height="36" fill="#a98450" stroke="#f5f5f5" strokeWidth="2" /><path d="M6 18l46-7 5 40-45 6z" fill="#fff" /><path d="M8 20l42-6 5 34-41 6z" fill="#3f83cf" /><path d="M10 34l42-6 2 10-42 8z" fill="#d6e6f2" /><path d="M12 44l42-8 1 12-41 6z" fill="#3a6796" /><path d="M32 38l18 1 4 8-12 3z" fill="#a7835a" />
        <path d="M42 40l20-4v18q0 6-10 6t-10-6z" fill="#7d7765" /><circle cx="52" cy="40" r="11" fill="#4a4f55" stroke="#d3d3d0" strokeWidth="2" /><circle cx="52" cy="40" r="6" fill="#8b8468" />
      </g>
    ),
  },
  {
    name: "Skype", open: true,
    art: (<g><path d="M22 3q7 0 11 4 26-1 28 27-1 4 0 6 5 6 3 14-3 11-14 11-6 0-9-3-25 3-31-18-2-6-1-12Q3 26 4 17 7 4 22 3z" fill="#45b3e8" /><text x="34" y="52" textAnchor="middle" fontSize="50" fontWeight="700" fill="#fff">S</text></g>),
  },
  {
    name: "TextEdit", open: true,
    art: (
      <g>
        <path d="M10 12l40-7 9 50-41 7z" fill="#fbfbfb" /><path d="M12 20l37-6M13 25l37-6M14 30l37-6M15 35l37-6M15 40l37-6M16 45l37-6M17 50l37-6M18 55l37-6" stroke="#b9c3cf" /><path d="M17 12l8 49" stroke="#e7b3b3" />
        <path d="M52 5l5 1-13 50-5 6 1-8z" fill="#8fb0cb" stroke="#4e6579" />
      </g>
    ),
  },
  {
    name: "Printer", open: true,
    art: (
      <g>
        <path d="M6 34l20-18 38 8v22L54 62 6 56z" fill="#e3e3e3" stroke="#999" /><path d="M6 34l48 6 10-16-38-8z" fill="#f4f4f4" stroke="#b0b0b0" /><path d="M54 40v22l10-16V24z" fill="#c2c2c2" /><path d="M26 20l22 4-1 4-22-4z" fill="#333" /><path d="M12 50l36 6v4l-36-5z" fill="#fafafa" stroke="#888" />
        <path d="M3 2h22v23l-2 2H3z" fill="#fafafa" stroke="#bbb" /><text x="14" y="10" textAnchor="middle" fontSize="8" fontWeight="700" fill="#111" fontFamily="Liberation Serif, serif">ABC</text><Lines x={7} y={13} w={14} n={6} step={2} color="#aaa" />
        <circle cx="50" cy="31" r="2" fill="#4a6fb8" /><circle cx="54" cy="34" r="2" fill="#b8494a" />
      </g>
    ),
  },
  {
    name: "Excel", open: true,
    art: (
      <g>
        <rect x="37" y="12" width="25" height="44" fill="#fafafa" /><path d="M40 16h18v6H40z" fill="#444" /><path d="M40 24h18v6H40zM40 32h18v6H40zM40 40h18v6H40zM40 48h18v4H40z" fill="#3f8f63" /><path d="M48 16v38" stroke="#fafafa" strokeWidth="2" />
        <path d="M6 12l33-6v56L6 57z" fill="#2f7d4f" /><text x="22" y="43" textAnchor="middle" fontSize="24" fontWeight="700" fill="#fff">X</text>
      </g>
    ),
  },
];

const shelf: App[] = [
  {
    name: "HTML document",
    art: (
      <g>
        <rect x="12" y="24" width="4" height="21" fill="#2f7d4f" /><path d="M15 4l4-2h23l12 14v46H15z" fill="#fafafa" stroke="#ddd" /><path d="M42 4l12 17-12-3z" fill="#dcdcdc" stroke="#bbb" />
        <Lines x={18} y={12} w={8} n={5} step={4} color="#b9b9d4" /><Lines x={18} y={33} w={18} n={2} step={2} color="#8d8de8" /><Lines x={18} y={40} w={10} n={5} step={3} color="#c4c4c4" />
        <text x="35" y="60" textAnchor="middle" fontSize="9" fill="#777">HTML</text>
      </g>
    ),
  },
  {
    name: "Trash",
    art: (
      <g>
        <path d="M12 10l44 0-5 49q-17 7-34 0z" fill="url(#bin)" stroke="#f2f2f2" /><path d="M14 12l7-8 8 4 9-5 8 6 8 3-3 4-18 1-16-1z" fill="#e4e4e4" /><path d="M22 8l5 7 4-6 7 6 4-7 3 7" fill="none" stroke="#444" strokeWidth="2" /><path d="M38 8l5 5" stroke="#c33" strokeWidth="2" /><path d="M30 12l4 3" stroke="#2d78c8" strokeWidth="3" />
      </g>
    ),
  },
];

function DockIcon({ app }: { app: App }) {
  return (
    <button aria-label={app.name} className="flex w-[68px] flex-col items-center">
      <svg className="h-16 w-[68px] overflow-visible" viewBox="0 0 68 64">{app.art}</svg>
      {app.open && <span className="mt-1 size-2 rounded-full bg-black" />}
    </button>
  );
}

function Gradients() {
  const stops: [string, string, string][] = [
    ["finder", "#5cc8f8", "#2b6ee8"], ["siri", "#120c3c", "#4a58d8"], ["blue", "#3fb4f2", "#1e6fe0"], ["silver", "#cdd8dc", "#7e8487"], ["sky", "#3a78cc", "#a8cdea"],
    ["bubble", "#6bbcf8", "#2a83e8"], ["orange", "#f9b33c", "#d6541c"], ["store", "#47b3f8", "#2b62e6"], ["tunes", "#ee5060", "#5b8af2"], ["note", "#f05a6c", "#5a7ef0"],
    ["atom", "#9ccf94", "#3c9c78"], ["vim", "#8dd35a", "#4f9a3a"], ["paper", "#ffffff", "#b4b4b4"], ["rblue", "#1d44b8", "#6cc4f8"], ["lens", "#8c8c88", "#c9c6ba"], ["bin", "#d8d8d6", "#f0f0f0"],
  ];
  return (
    <svg className="absolute size-0" aria-hidden="true">
      <defs>
        {stops.map(([id, a, b]) => (
          <linearGradient key={id} id={id} x1="0" y1="0" x2="0" y2="1">
            <stop offset="0" stopColor={a} /><stop offset="1" stopColor={b} />
          </linearGradient>
        ))}
      </defs>
    </svg>
  );
}

function Dock() {
  return (
    <footer className="flex h-[86px] shrink-0 bg-[#17130f]">
      <div className="flex h-[62px] flex-1 items-end justify-center rounded-bl-[10px] border-t-2 border-[#8b8b8b] bg-linear-to-b from-[#a7a7a7] to-[#c4c4c4] pb-4">
        <svg className="w-[22px]" viewBox="0 0 22 22" stroke="#5c5c5c" strokeWidth="2"><path d="M11 0v22M0 11h22" /></svg>
      </div>
      <nav aria-label="Dock" className="flex shrink-0 items-start rounded-t-[10px] border-t border-[#8a888b] bg-[linear-gradient(90deg,#9a9698_0%,#949092_14%,#71727d_19%,#6f707a_27%,#76716f_34%,#74716f_45%,#7c737b_53%,#77757a_60%,#7a8280_70%,#7f7474_78%,#877a7a_88%,#8b796f_92%,#7b7a7f_100%)] px-[6px] pt-[5px]">
        {apps.map((a, i) => (<DockIcon key={i} app={a} />))}
        <span className="mx-4 h-[62px] w-px self-start bg-[#55504f]" />
        {shelf.map((a) => (<DockIcon key={a.name} app={a} />))}
      </nav>
      <div className="flex h-12 min-w-0 flex-1 items-start border-t-2 border-[#8b8b8b] bg-linear-to-b from-[#9b9b9b] to-[#c2c2c2] font-['Open_Sans',sans-serif] text-[26px] leading-10 whitespace-nowrap text-[#2a2a2a]">in th</div>
    </footer>
  );
}

export default function App() {
  return (
    <div className="flex h-screen flex-col overflow-hidden bg-[#9b9b9b] font-[Roboto,sans-serif]">
      <Gradients />
      <MenuBar />
      <div className="flex min-h-0 flex-1 flex-col overflow-hidden rounded-[10px]">
        <Toolbar />
        <TabBar />
        <WebApp />
      </div>
      <Dock />
    </div>
  );
}
